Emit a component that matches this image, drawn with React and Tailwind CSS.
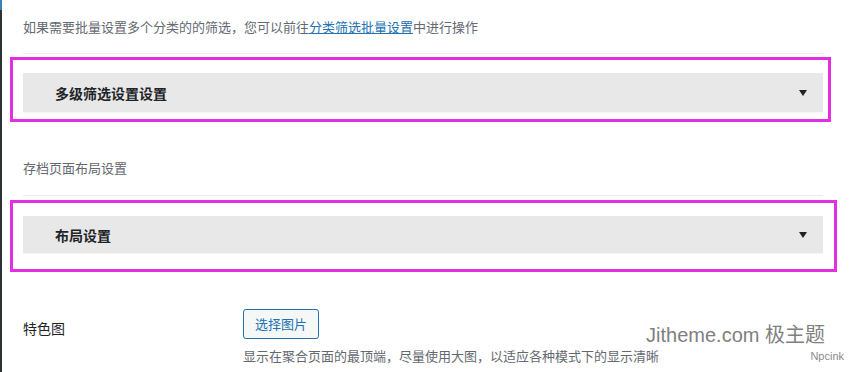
import React from "react";

const font = { fontFamily: '"Noto Sans CJK SC", "Liberation Sans", sans-serif' };

const Caret = () => (
  <svg width="8" height="6" viewBox="0 0 8 6" className="block">
    <path d="M0 0 L8 0 L4 6 Z" fill="#1d2327" />
  </svg>
);

const Postbox = ({ title, height }) => (
  <div
    className={`flex items-center justify-between bg-[#e8e8e8] pl-[32px] pr-[16px] shadow-[0_1px_1px_rgba(0,0,0,0.04)] ${height}`}
  >
    <h2 className="text-[14px] font-semibold leading-5 text-[#1d2327]">
      {title}
    </h2>
    <Caret />
  </div>
);

const App = () => {
  return (
    <div
      className="relative flex h-[372px] w-full overflow-hidden bg-white"
      style={font}
    >
      {/* admin sidebar edge */}
      <div className="flex w-[2px] shrink-0 flex-col">
        <div className="h-[10px] bg-[#3c7fb0]" />
        <div className="flex-1 bg-[#2c3338]" />
      </div>

      <div className="flex w-[800px] flex-col pl-[21px]">
        <p className="mt-[17px] text-[13px] leading-5 text-[#646970]">
          如果需要批量设置多个分类的的筛选，您可以前往
          <a href="#" className="text-[#2271b1] underline">
            分类筛选批量设置
          </a>
          中进行操作
        </p>
        <div className="mt-[16px] h-px w-[800px] bg-[#ececec]" />

        <div className="-ml-[13px] mt-[3px] w-[821px] border-[3px] border-[#e22fe0] pb-[7px] pl-[10px] pr-[5px] pt-[13px]">
          <Postbox title="多级筛选设置设置" height="h-[39px]" />
        </div>

        <p className="mt-[36px] text-[13px] leading-5 text-[#646970]">
          存档页面布局设置
        </p>
        <div className="mt-[17px] h-px w-[800px] bg-[#ececec]" />

        <div className="-ml-[13px] mt-[4px] w-[827px] border-[3px] border-[#e22fe0] pb-[16px] pl-[10px] pr-[11px] pt-[13px]">
          <Postbox title="布局设置" height="h-[37px]" />
        </div>

        <div className="mt-[37px] flex">
          <div className="w-[220px] shrink-0 pt-[9px] text-[14px] leading-5 text-[#1d2327]">
            特色图
          </div>
          <div className="flex flex-col items-start">
            <button className="h-[30px] rounded-[3px] border border-[#2271b1] bg-[#f6f7f7] px-[11px] text-[13px] leading-5 text-[#2271b1]">
              选择图片
            </button>
            <p className="mt-[7px] text-[13px] leading-5 text-[#646970]">
              显示在聚合页面的最顶端，尽量使用大图，以适应各种模式下的显示清晰
            </p>
          </div>
        </div>
      </div>

      {/* watermark */}
      <span
        className="pointer-events-none absolute right-[30px] top-[322px] text-[20px] leading-[26px] text-[#808080]"
        style={{ fontFamily: '"Liberation Sans", "Noto Sans CJK SC", sans-serif' }}
      >
        Jitheme.com 极主题
      </span>
      <span
        className="pointer-events-none absolute right-[11px] top-[348px] text-[11px] leading-[16px] text-[#8a8a8a]"
        style={{ fontFamily: '"Liberation Sans", sans-serif' }}
      >
        Npcink
      </span>
    </div>
  );
};

export default App;
